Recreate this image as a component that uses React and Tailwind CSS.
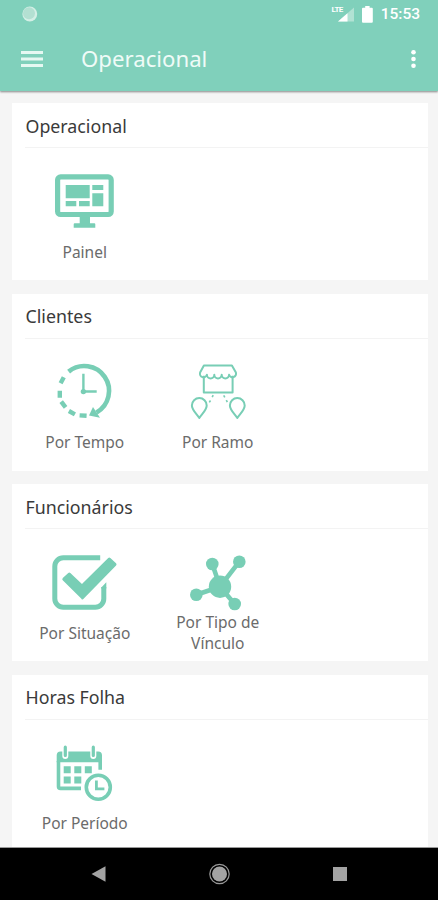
const sections = [
  { title: "Operacional", items: [{ label: "Painel", icon: PanelIcon }] },
  {
    title: "Clientes",
    items: [
      { label: "Por Tempo", icon: TimeIcon },
      { label: "Por Ramo", icon: BranchIcon },
    ],
  },
  {
    title: "Funcionários",
    items: [
      { label: "Por Situação", icon: StatusIcon },
      { label: "Por Tipo de Vínculo", icon: LinkIcon },
    ],
  },
  { title: "Horas Folha", items: [{ label: "Por Período", icon: PeriodIcon }] },
];

function Icon({ children }) {
  return (
    <svg
      className="h-[62px] w-[70px] shrink-0 text-[#78ceb5]"
      viewBox="0 0 70 62"
      fill="none"
      stroke="currentColor"
    >
      {children}
    </svg>
  );
}

function PanelIcon() {
  return (
    <Icon>
      <rect x="8.6" y="7.9" width="53.6" height="37.6" rx="3" strokeWidth="5.2" />
      <g fill="currentColor" stroke="none">
        <path d="M16.7 16h24v13.3h-24zM43.3 16h11v5h-11zM43.3 24.3h11v13h-11zM16.7 32h10.6v5.3H16.7zM30 32h10.7v5.3H30z" />
        <path d="M30.7 47H41v7.2h4.3a1 1 0 0 1 1 1v3.5H24.7v-3.5a1 1 0 0 1 1-1h5z" />
      </g>
    </Icon>
  );
}

function TimeIcon() {
  return (
    <Icon>
      <path d="M19.6 11.6A24.8 24.8 0 1 1 47.5 52.4" strokeWidth="4.6" />
      <path
        d="M14.8 17.2l-3.2 6M10.8 30.8v7M12.2 41.6l4.4 5.8M19.9 51l6 3.4M30.6 55.4l7 .4"
        strokeWidth="4.4"
      />
      <path d="M40 55.4L44 47l7 10.8z" fill="currentColor" stroke="none" />
      <path d="M34.4 13.8v17.7h13.3" strokeWidth="2.4" />
      <circle cx="34.4" cy="31.6" r="2.7" fill="currentColor" stroke="none" />
    </Icon>
  );
}

function BranchIcon() {
  return (
    <Icon>
      <g strokeWidth="2" strokeLinejoin="round">
        <path d="M21.9 5.6h28l4 7a3.5 3.5 0 0 1-6.8 2.2 3.5 3.5 0 0 1-7.4 0 3.5 3.5 0 0 1-7.4 0 3.5 3.5 0 0 1-7.4 0 3.5 3.5 0 0 1-6.8-2.2z" />
        <path d="M21.8 15.8v16.6h28.8V15.8" />
        <path d="M17.3 58c-2.6-4-7.4-8-7.4-12.5a7.4 7.4 0 0 1 14.8 0c0 4.5-4.8 8.5-7.4 12.5z" />
        <path d="M55.3 58c-2.6-4-7.4-8-7.4-12.5a7.4 7.4 0 0 1 14.8 0c0 4.5-4.8 8.5-7.4 12.5z" />
      </g>
      <path
        d="M31.2 35.2l-1 2M28.5 40.5l-1.2 1.9M41.7 35.4l1.1 2M44.3 40.1l1 2"
        strokeWidth="1.6"
      />
    </Icon>
  );
}

function StatusIcon() {
  return (
    <Icon>
      <path
        d="M51.2 7.8H14.3a8.5 8.5 0 0 0-8.5 8.5v32.4a8.5 8.5 0 0 0 8.5 8.5h32a8.5 8.5 0 0 0 8.5-8.5V37"
        strokeWidth="5"
      />
      <path
        d="M14.8 29.2l5.5-5.2L33 36 60.3 9l5.7 5.4-32.5 33.4z"
        fill="currentColor"
        strokeWidth="3"
        strokeLinejoin="round"
      />
      <path d="M52.3 38.6v-1.2l5-5.2v6.4z" fill="currentColor" stroke="none" />
    </Icon>
  );
}

function LinkIcon() {
  return (
    <Icon>
      <path d="M30.3 14L38 36.7l19.3-25M14.3 44.7l23.7-8L52.7 54" strokeWidth="4.6" />
      <g fill="currentColor" stroke="none">
        <circle cx="38" cy="36.7" r="11.2" />
        <circle cx="30.3" cy="14" r="6.3" />
        <circle cx="57.3" cy="11.7" r="6.3" />
        <circle cx="14.3" cy="44.7" r="6.3" />
        <circle cx="52.7" cy="54" r="6.3" />
      </g>
    </Icon>
  );
}

function PeriodIcon() {
  return (
    <Icon>
      <path d="M9.5 20v25.4a2 2 0 0 0 2 2H32M51.2 20v8.8" strokeWidth="3.6" />
      <g fill="currentColor" stroke="none">
        <path d="M11.5 10.5h37.7a3.8 3.8 0 0 1 3.8 3.8v6.9H7.7v-6.9a3.8 3.8 0 0 1 3.8-3.8z" />
        <path d="M14.7 25.2h7v7h-7zM25.3 25.2h7v7h-7zM35.8 25.2h7v7h-7zM14.7 35.6h7v7h-7zM25.3 35.6h7v7h-7z" />
      </g>
      <path d="M16.3 6v9M44.3 6v9" stroke="#fff" strokeWidth="6" strokeLinecap="round" />
      <path d="M16.3 6.2v8.2M44.3 6.2v8.2" strokeWidth="3.2" strokeLinecap="round" />
      <circle cx="49.3" cy="46.2" r="12" strokeWidth="3.6" />
      <path d="M47.4 39.6v8.2h8" strokeWidth="2.8" />
    </Icon>
  );
}

function StatusBar() {
  return (
    <div className="flex h-7 items-center pr-[18px] pl-[22px]">
      <svg className="size-4" viewBox="0 0 16 16">
        <circle cx="7.8" cy="8" r="7.4" fill="#d4efe6" />
        <circle cx="7" cy="7.2" r="6" fill="#b3e0d2" />
      </svg>
      {/* signal */}
      <div className="ml-auto flex h-4 items-start">
        <span className="-mr-[5px] font-[Roboto] text-[8px] leading-[7px] font-bold tracking-[-0.6px] text-white">
          LTE
        </span>
        <svg className="h-4 w-4" viewBox="0 0 16 16">
          <path d="M0 15.5L16 1.5v14z" fill="#b1e2d4" />
          <path d="M0 15.5l9.5-8.3v8.3z" fill="#fff" />
        </svg>
      </div>
      <svg className="ml-2 h-[17px] w-[11px]" viewBox="0 0 11 17">
        <path
          d="M3.2 0h4.4v1.8h2.2a1 1 0 0 1 1 1v13a1 1 0 0 1-1 1H1a1 1 0 0 1-1-1v-13a1 1 0 0 1 1-1h2.2z"
          fill="#fff"
        />
      </svg>
      <span className="ml-2 pt-px font-[Roboto] text-[15.5px] leading-none font-medium text-white">15:53</span>
    </div>
  );
}

function Header() {
  return (
    <header className="z-10 h-[91px] shrink-0 bg-[#80d0bb] shadow-[0_1px_2px_rgba(0,0,0,0.45)]">
      <StatusBar />
      <div className="flex h-[61px] items-center px-[21px]">
        <svg className="h-4 w-[22px]" viewBox="0 0 22 16" stroke="#e6f8f2" strokeWidth="3">
          <path d="M0 1.5h22M0 8h22M0 14.5h22" />
        </svg>
        <h1 className="ml-[38px] pt-[2px] text-[22.2px] leading-none text-[#effbf7]">Operacional</h1>
        <svg className="ml-auto h-5 w-[7px]" viewBox="0 0 7 20" fill="#fff">
          <circle cx="3.5" cy="3.2" r="2.3" />
          <circle cx="3.5" cy="10" r="2.3" />
          <circle cx="3.5" cy="16.8" r="2.3" />
        </svg>
      </div>
    </header>
  );
}

function Card({ title, items }) {
  return (
    <section className="h-[177px] shrink-0 bg-white">
      <h2 className="ml-[13px] flex h-[45px] items-center border-b border-[#f3f3f3] pt-[2px] pl-[0.5px] text-[17.8px] text-[#3a3a3a]">
        {title}
      </h2>
      <div className="flex px-[5.5px] pt-[21px]">
        {items.map(({ label, icon: ItemIcon }) => (
          <div key={label} className="flex w-[133px] flex-col items-center">
            <ItemIcon />
            <span className="flex h-[42px] w-[102px] items-center justify-center pl-[1.5px] text-center text-[15.5px] leading-[21px] text-[#6b6b6b]">
              {label}
            </span>
          </div>
        ))}
      </div>
    </section>
  );
}

function NavigationBar() {
  return (
    <nav className="z-10 flex h-[53px] shrink-0 items-center justify-between border-t border-[#999] bg-black px-[91px]">
      <svg className="h-4 w-[15px]" viewBox="0 0 15 16" fill="#a3a3a3">
        <path d="M.5 8l14-7.700v15.400z" />
      </svg>
      <svg className="size-[22px]" viewBox="0 0 22 22">
        <circle cx="10.5" cy="11" r="9.7" fill="none" stroke="#999" strokeWidth="1.2" />
        <circle cx="10.5" cy="11" r="7.5" fill="#a3a3a3" />
      </svg>
      <div className="size-[14px] bg-[#a3a3a3]" />
    </nav>
  );
}

export default function App() {
  return (
    <div className="flex h-[900px] w-[438px] flex-col overflow-hidden bg-[#f5f5f5] font-['Noto_Sans',sans-serif]">
      <Header />
      <main className="flex min-h-0 flex-1 flex-col gap-[13.5px] overflow-hidden pt-[12px] pr-[10px] pl-[12px]">
        {sections.map((section) => (
          <Card key={section.title} {...section} />
        ))}
      </main>
      <NavigationBar />
    </div>
  );
}
